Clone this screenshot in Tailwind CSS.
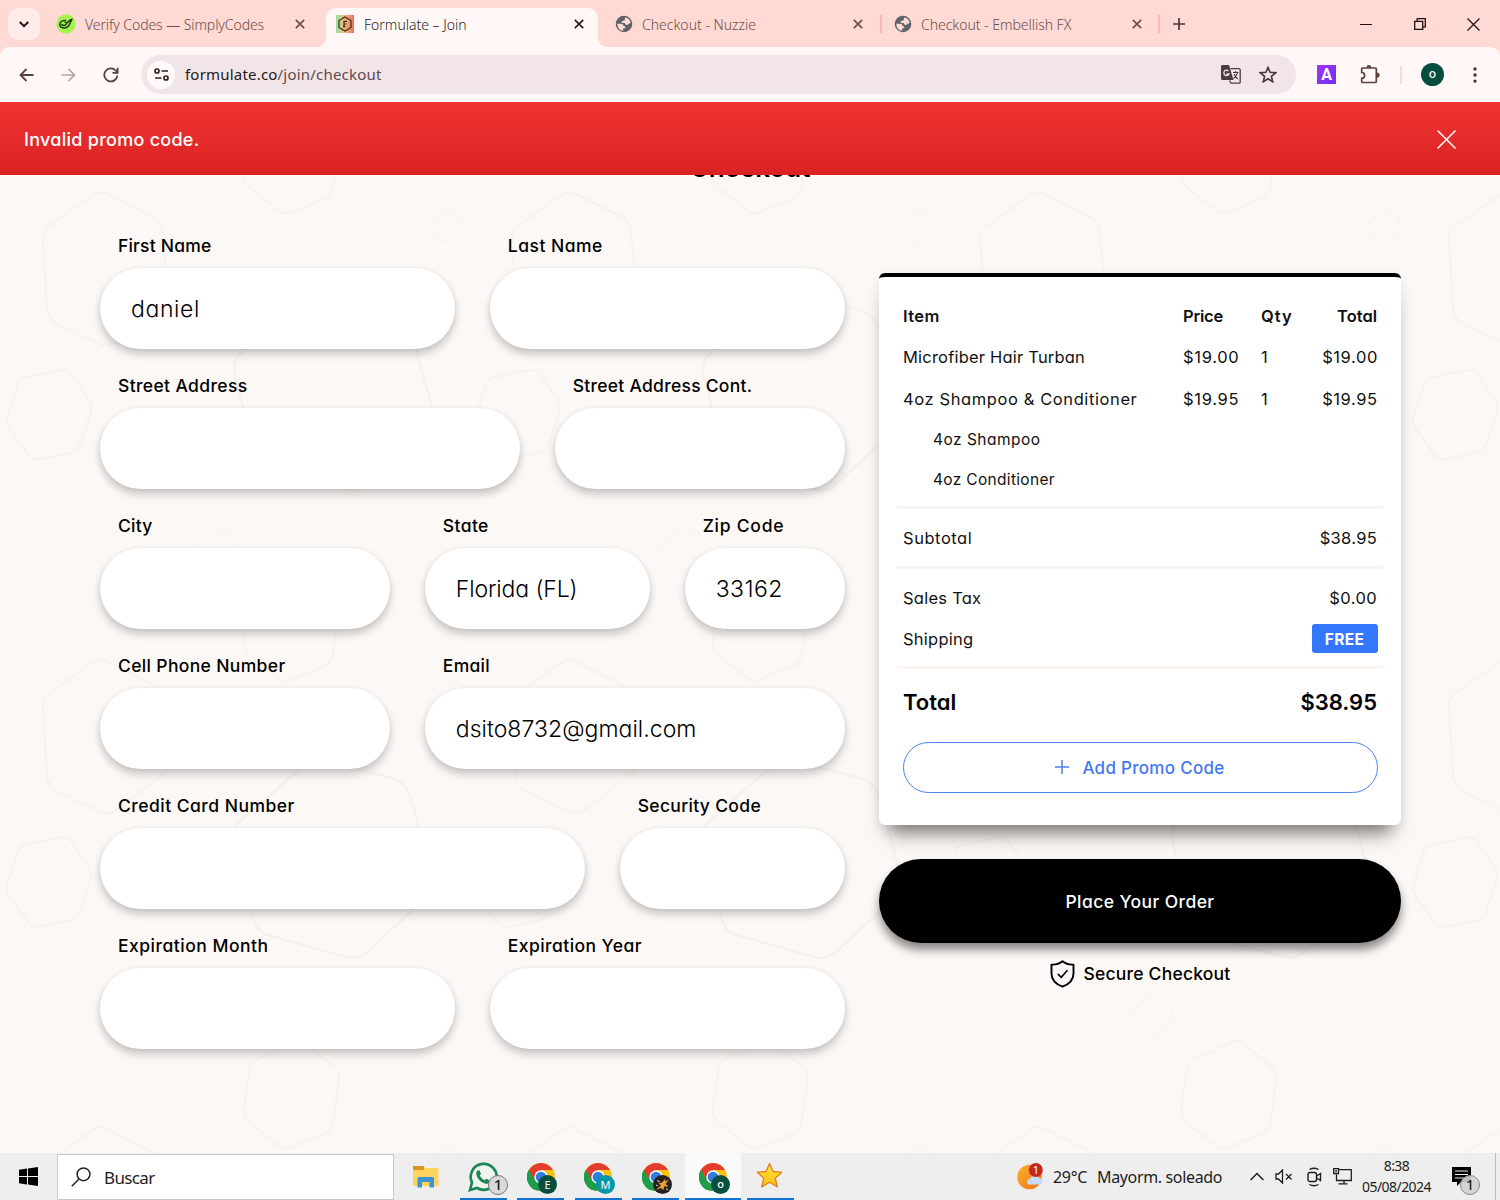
<!DOCTYPE html>
<html lang="en">
<head>
<meta charset="utf-8">
<title>Formulate – Join</title>
<script src="https://cdn.jsdelivr.net/npm/@tailwindcss/browser@4"></script>
</head>
<body class="w-[1500px] h-[1200px] overflow-hidden flex flex-col font-['Noto_Sans',sans-serif] text-black bg-white">

<svg width="0" height="0" class="absolute">
  <defs>
    <symbol id="x" viewBox="0 0 10 10"><path d="M.8 .8 9.2 9.2M9.2 .8 .8 9.2" stroke="currentColor" stroke-width="1.7" fill="none"/></symbol>
    <symbol id="globe" viewBox="0 0 20 20"><circle cx="10" cy="10" r="8.300" fill="currentColor"/><path fill="#ffd9d3" d="M3.300 9.800H7.300Q9.600 10 9.700 12.200H11.200V14.200H9.200V16.800Q3.600 16.300 3.300 9.800zM11 3.400Q15.400 4 16.700 8.500 15.800 9.800 14.800 9.600 14 11.600 12.300 10.800 10.600 10.600 10.800 8.900H8.600Q6.900 8.600 7.700 7.200 8.500 6.600 9.800 6.700 10.900 6.500 10.800 5.200z"/></symbol>
    <symbol id="chrome" viewBox="0 0 28 28">
      <circle cx="14" cy="14" r="14" fill="#fbc116"/>
      <path d="M14 14 1.900 7A14 14 0 0 0 13.500 28L20 17.500z" fill="#1e9e4a"/>
      <path d="M14 14 1.900 7A14 14 0 0 1 26.100 7H14z" fill="#e33b2e"/>
      <path d="M1.900 7 8 17.500 14 14V7z" fill="#e33b2e"/>
      <path d="M1.900 7 8 17.500 13 20 8 27A14 14 0 0 1 1.900 7z" fill="#1e9e4a"/>
      <circle cx="14" cy="14" r="6.700" fill="#fff"/><circle cx="14" cy="14" r="5.300" fill="#2f7de1"/>
    </symbol>
  </defs>
</svg>

<!-- Tab strip -->
<header class="h-[47px] shrink-0 bg-[#ffd9d3] flex items-start text-[14px] font-[350] text-[#6b4f4c]">
  <div class="ml-2 mt-2 w-8 h-8 rounded-[10px] bg-[#ffece8] flex items-center justify-center text-[#1f1311]">
    <svg class="w-[10px] h-[7px]" viewBox="0 0 10 7" fill="none" stroke="currentColor" stroke-width="2"><path d="M.8 1 5 5.200 9.200 1"/></svg>
  </div>
  <div class="ml-4 mt-2 w-[252px] h-8 flex items-center">
    <svg class="w-5 h-5" viewBox="0 0 20 20"><circle cx="10" cy="10" r="9.700" fill="#a4f24e"/><g fill="none" stroke="#173a12" stroke-width="1.500" stroke-linecap="round" stroke-linejoin="round"><path d="M9.500 6.500C5 6 2.800 9.500 4 12s6 2.600 8.300 .3C13.800 10.500 14 8 16 5.200 13.500 5.500 12.500 7.500 10.800 9.200L9.200 8.200"/><path d="M5.800 10.500C7 12 9 11.800 10.200 10.300"/></g></svg>
    <span class="ml-[9px] w-[210px] whitespace-nowrap tracking-[-0.080px]">Verify Codes — SimplyCodes</span>
    <svg class="w-[10px] h-[10px] shrink-0"><use href="#x"/></svg>
  </div>
  <div class="mt-2 ml-[18px] w-[272px] h-[39px] rounded-t-[10px] bg-[#fff8f6] text-[#2b1d1b] relative flex items-start">
    <div class="absolute -left-[10px] bottom-0 w-[10px] h-[10px] bg-[radial-gradient(circle_at_0_0,#ffd9d3_10px,#fff8f6_10.500px)]"></div>
    <div class="absolute -right-[10px] bottom-0 w-[10px] h-[10px] bg-[radial-gradient(circle_at_100%_0,#ffd9d3_10px,#fff8f6_10.500px)]"></div>
    <div class="h-8 flex items-center pl-[10px]">
      <div class="w-[18px] h-[18px] bg-linear-to-r from-[#8fe3a4] via-[#f3b27a] to-[#ee6f63]">
        <svg viewBox="0 0 18 18" fill="none" stroke="#3c2c14" stroke-width="1.200"><path d="M9 2 15 5.500V12.500L9 16 3 12.500V5.500z"/><path d="M11 6.300H8V11.700M8 9h2.500M7 11.700h2.500"/></svg>
      </div>
      <span class="ml-[10px] w-[210px] whitespace-nowrap">Formulate – Join</span>
      <svg class="w-[10px] h-[10px] shrink-0"><use href="#x"/></svg>
    </div>
  </div>
  <div class="mt-2 ml-4 h-8 flex items-center">
    <svg class="w-5 h-5 text-[#5f6368]"><use href="#globe"/></svg>
    <span class="ml-2 w-[211px] whitespace-nowrap">Checkout - Nuzzie</span>
    <svg class="w-[10px] h-[10px]"><use href="#x"/></svg>
    <i class="ml-[17px] w-[2px] h-[18px] bg-[#ffb8ae]"></i>
    <svg class="ml-[11px] w-5 h-5 text-[#5f6368]"><use href="#globe"/></svg>
    <span class="ml-2 w-[211px] whitespace-nowrap tracking-[-0.030px]">Checkout - Embellish FX</span>
    <svg class="w-[10px] h-[10px]"><use href="#x"/></svg>
    <i class="ml-4 w-[2px] h-[18px] bg-[#ffb8ae]"></i>
    <svg class="ml-[13px] w-3 h-3" viewBox="0 0 12 12"><path d="M6 0V12M0 6H12" stroke="#4d3330" stroke-width="1.700"/></svg>
  </div>
  <div class="ml-auto mr-5 mt-2 h-8 flex items-center text-[#1c1110]">
    <svg class="w-3 h-3" viewBox="0 0 12 12"><path d="M0 6.500H12" stroke="currentColor"/></svg>
    <svg class="ml-[42px] w-3 h-3" viewBox="0 0 12 12" fill="none" stroke="currentColor" stroke-width="1.300"><path d="M.7 3.300H8.700V11.300H.7zM3.200 3.300V.7H11.300V8.800H8.700"/></svg>
    <svg class="ml-[41px] w-[13px] h-[13px]" viewBox="0 0 13 13" fill="none" stroke="currentColor" stroke-width="1.200"><path d="M.5 .5 12.500 12.500M12.500 .5 .5 12.500"/></svg>
  </div>
</header>

<!-- Address bar -->
<div class="h-[55px] shrink-0 bg-[#ffd9d3]">
  <div class="h-full rounded-t-[9px] bg-[#fff8f6] flex items-center text-[#5a3f3d]">
    <svg class="ml-[19px] w-[15px] h-[14px]" viewBox="0 0 15 14" fill="none" stroke="#5a3f3d" stroke-width="1.800"><path d="M14.500 7H1.500M7.500 1 1.500 7l6 6"/></svg>
    <svg class="ml-[27px] w-[15px] h-[14px]" viewBox="0 0 15 14" fill="none" stroke="#b5a5a3" stroke-width="1.700"><path d="M.5 7H13.500M7.500 1l6 6-6 6"/></svg>
    <svg class="ml-[27px] w-4 h-4" viewBox="0 0 16 16" fill="none" stroke="#5a3f3d" stroke-width="1.800"><path d="M14.300 8.500A6.500 6.500 0 1 1 12.600 3.500L14.500 5.500M14.600 .8V5.900H9.500"/></svg>
    <div class="ml-[22px] w-[1155px] h-[39px] rounded-full bg-[#f1e5e7] flex items-center">
      <div class="ml-[6px] w-7 h-7 rounded-full bg-[#fffaf9] flex items-center justify-center">
        <svg class="w-[15px] h-[13px]" viewBox="0 0 15 13" fill="none" stroke="#33201f" stroke-width="1.700"><circle cx="3" cy="3" r="2"/><path d="M7.500 3H14M1 10H7.500"/><circle cx="12" cy="10" r="2"/></svg>
      </div>
      <span class="ml-[10px] text-[15px] tracking-[0.200px] text-[#5f4a4b]"><span class="text-[#23191b]">formulate.co</span>/join/checkout</span>
      <svg class="ml-auto w-[20px] h-[19px]" viewBox="0 0 20 19"><path d="M1.500 0H8l4.500 15H1.500A1.500 1.500 0 0 1 0 13.500V1.500A1.500 1.500 0 0 1 1.500 0z" fill="#4a3c3d"/><path d="M9.500 3.700H18A1.200 1.200 0 0 1 19.200 5V17A1.200 1.200 0 0 1 18 18.200H10L8.500 15.500" fill="none" stroke="#4a3c3d" stroke-width="1.300"/><path d="M7.500 6A2.700 2.700 0 1 0 8 9H5.500" fill="none" stroke="#f1e5e7" stroke-width="1.300"/><path d="M12 7.500H17.500M14.600 6v1.500M16.500 7.500C16 10.500 14 12.500 12.500 13.500M13 9c.8 2 2 3.600 3.800 5.200" fill="none" stroke="#4a3c3d" stroke-width="1.100"/></svg>
      <svg class="ml-[18px] mr-[19px] w-[18px] h-[17px]" viewBox="0 0 18 17" fill="none" stroke="#4a3538" stroke-width="1.600"><path d="M9 1.500 11.100 6.300l5.500.5-4.200 3.500 1.300 5.400L9 12.800l-4.700 2.900 1.300-5.400L1.400 6.800l5.500-.5z"/></svg>
    </div>
    <div class="ml-[21px] w-[19px] h-[19px] bg-linear-to-br from-[#a035f5] to-[#6d2cf2] flex items-center justify-center text-white font-bold text-[16px] font-['Roboto',sans-serif]">A</div>
    <svg class="ml-[24px] w-[20px] h-[20px]" viewBox="0 0 20 20"><path d="M2.500 3H15.500A.8.800 0 0 1 16.300 3.800V16.700A.8.800 0 0 1 15.500 17.500H2.500A.8.800 0 0 1 1.700 16.700V13.300A2.900 2.900 0 0 0 1.700 7.500V3.800A.8.800 0 0 1 2.500 3z" fill="none" stroke="#5d3f3c" stroke-width="1.700"/><path d="M6.500 2.500a2.500 2.500 0 0 1 5 0zM17 7.500a2.600 2.600 0 0 1 0 5.200z" fill="#5d3f3c"/></svg>
    <i class="ml-[20px] w-[2px] h-[18px] bg-[#ffd9d3]"></i>
    <div class="ml-[19px] w-[23px] h-[23px] rounded-full bg-[#054d3f] text-white text-[12px] leading-[22px] text-center font-medium">o</div>
    <svg class="ml-[29px] w-1 h-4" viewBox="0 0 4 16" fill="#4a2f2d"><circle cx="2" cy="1.900" r="1.700"/><circle cx="2" cy="8" r="1.700"/><circle cx="2" cy="14.100" r="1.700"/></svg>
  </div>
</div>

<!-- Page -->
<main class="relative h-[1051px] shrink-0 bg-[#fcf8f5] font-['Inter',sans-serif] [font-feature-settings:'cv11']">
  <svg class="absolute inset-0 w-full h-full" viewBox="0 102 1500 1051">
    <defs>
      <pattern id="hex" width="468.700" height="467.500" patternUnits="userSpaceOnUse">
        <g fill="none" stroke="#f5f1ee" stroke-width="1.500" stroke-linejoin="round">
          <path d="M93 195Q100 189 107 194L153 217Q161 221 162 230L168 294Q169 302 162 307L118 341Q109 349 100 344L57 324Q48 318 47 309L43 240Q42 232 49 226z"/>
          <path d="M26 377 60 370Q67 369 71 374L89 400Q93 406 91 412L80 444Q77 451 70 453L40 459Q32 460 28 454L9 428Q5 421 8 415L18 383Q21 378 26 377z"/>
          <path d="M260 123 293 108Q300 103 306 108L334 132Q340 137 339 144L333 187Q332 194 326 198L292 212Q284 216 278 210L250 188Q243 182 244 174L250 132Q252 126 260 123z"/>
          <path id="tilt" stroke-width="2.200" stroke="#f4f0ee" d="M304 298Q313 290 324 293L390 310Q405 314 410 328L432 407Q436 421 425 431L371 481Q359 494 344 489L266 467Q255 462 253 450L235 375Q232 361 242 352z"/>
          <use href="#tilt" y="-467.500"/>
          <path stroke-width="1" stroke="#f7f3f0" d="M212 60 232 66 237 85 218 104 195 98 192 79zM448 210 461 217 463 231 450 243 435 238 431 223z"/>
        </g>
      </pattern>
    </defs>
    <rect y="102" width="1500" height="1051" fill="url(#hex)"/>
  </svg>

  <div class="absolute inset-x-0 top-0 h-[73px] z-10 bg-linear-to-b from-[#f03333] to-[#db2122] flex items-center justify-between pt-[2px] pl-6 pr-[44px] text-white">
    <span class="text-[18px] font-[450] tracking-[0.270px]">Invalid promo code.</span>
    <svg class="w-[19px] h-[19px]" viewBox="0 0 19 19" stroke="#fff" stroke-width="1.600" stroke-linecap="round"><path d="M1 1 18 18M18 1 1 18"/></svg>
  </div>

  <h1 class="relative pt-[50px] h-[127px] text-center text-[26px] leading-[32px] font-semibold">Checkout</h1>

  <div class="relative flex pl-[100px]">
    <form class="grid grid-cols-12 gap-x-[35px] auto-rows-[139.900px] w-[744.500px] mt-[0.400px] [&_label]:block [&_label]:h-[34px] [&_label]:mb-[5px] [&_label]:leading-[33px] [&_label]:pl-[18px] [&_label]:text-[17.500px] [&_label]:font-[450] [&_label]:whitespace-nowrap [&_input]:block [&_input]:w-full [&_input]:h-[81px] [&_input]:rounded-full [&_input]:bg-white [&_input]:px-[31px] [&_input]:text-[23px] [&_input]:font-[330] [&_input]:shadow-[0_5px_9px_rgba(0,0,0,0.220),0_0_5px_rgba(0,0,0,0.040)]">
      <div class="col-span-6"><label class="tracking-[0.200px]">First Name</label><input class="tracking-[0.600px]" value="daniel"></div>
      <div class="col-span-6"><label class="tracking-[0.500px]">Last Name</label><input></div>
      <div class="col-span-7"><label class="tracking-[0.370px]">Street Address</label><input></div>
      <div class="col-span-5"><label class="tracking-[0.270px]">Street Address Cont.</label><input></div>
      <div class="col-span-5"><label class="tracking-[0.250px]">City</label><input></div>
      <div class="col-span-4"><label class="tracking-[0.400px]">State</label><input class="tracking-[-0.120px]" value="Florida (FL)"></div>
      <div class="col-span-3"><label class="tracking-[0.750px]">Zip Code</label><input class="tracking-[0.450px]" value="33162"></div>
      <div class="col-span-5"><label class="tracking-[0.350px]">Cell Phone Number</label><input></div>
      <div class="col-span-7"><label class="tracking-[0.300px]">Email</label><input class="tracking-[0.040px]" value="dsito8732@gmail.com"></div>
      <div class="col-span-8"><label class="tracking-[0.480px]">Credit Card Number</label><input></div>
      <div class="col-span-4"><label class="tracking-[0.320px]">Security Code</label><input></div>
      <div class="col-span-6"><label class="tracking-[0.500px]">Expiration Month</label><input></div>
      <div class="col-span-6"><label class="tracking-[0.450px]">Expiration Year</label><input></div>
    </form>

    <aside class="ml-[34.500px] mt-[44px] w-[522px]">
      <section class="h-[552px] rounded-[6px] border-t-4 border-black bg-white shadow-[0_18px_18px_-10px_rgba(0,0,0,0.500),0_4px_14px_rgba(0,0,0,0.080)] px-[18px] pt-[19px] text-[16.500px] font-[370]">
        <div class="px-[6px] grid grid-cols-[280px_78px_1fr_auto] items-center auto-rows-[42px] text-[#111]">
          <b class="font-semibold h-[42px] leading-[40px] tracking-[0.400px]">Item</b><b class="font-semibold h-[42px] leading-[40px] tracking-[-0.200px]">Price</b><b class="font-semibold h-[42px] leading-[40px] tracking-[1px]">Qty</b><b class="font-semibold h-[42px] leading-[40px] text-right">Total</b>
          <span class="tracking-[0.200px] pb-1">Microfiber Hair Turban</span><span class="tracking-[0.700px] pb-1">$19.00</span><span class="pb-1">1</span><span class="tracking-[0.600px] -mr-px pb-1">$19.00</span>
          <span class="tracking-[0.600px] pb-[4px]">4oz Shampoo &amp; Conditioner</span><span class="tracking-[0.700px] pb-[4px]">$19.95</span><span class="pb-[4px]">1</span><span class="tracking-[0.600px] -mr-px pb-[4px]">$19.95</span>
        </div>
        <div class="pl-[36px] text-[15.500px] leading-[40px] -mt-[2px] text-[#111]">
          <p class="tracking-[0.480px]">4oz Shampoo</p>
          <p class="tracking-[0.320px]">4oz Conditioner</p>
        </div>
        <div class="mt-[6px] border-t-3 border-[#f7f4f2] h-[60px] px-[6px] pt-[2px] flex items-center justify-between text-[#111]"><span class="tracking-[0.550px]">Subtotal</span><span class="tracking-[0.300px]">$38.95</span></div>
        <div class="border-t-3 border-[#f8f4f1] px-[6px] h-[100px] pt-[9px] text-[#111]">
          <div class="h-[41px] flex items-center justify-between"><span class="tracking-[0.250px]">Sales Tax</span><span class="tracking-[0.400px]">$0.00</span></div>
          <div class="h-[41px] flex items-center justify-between"><span class="tracking-[0.250px]">Shipping</span><span class="-mt-[2px] -mr-[0.500px] w-[66px] h-[29px] rounded-[3px] bg-[#3377ff] text-white text-[15.500px] font-bold tracking-[0.400px] leading-[31px] text-center">FREE</span></div>
        </div>
        <div class="border-t-3 border-[#fbf4f0] px-[6px] h-[70px] flex items-center justify-between text-[22px] font-semibold"><span>Total</span><span>$38.95</span></div>
        <button type="button" class="mt-[6px] ml-[5.500px] w-[475px] h-[51px] rounded-full border border-[#4a82f0] flex items-center justify-center text-[#4078f2] text-[17px] font-[450] tracking-[0.300px]">
          <svg class="mr-[13px] w-[14px] h-[14px] -mt-px" viewBox="0 0 14 14" stroke="#4a82f0" stroke-width="1.500"><path d="M7 0V14M0 7H14"/></svg><span class="pt-[2px]">Add Promo Code</span></button>
      </section>
      <button type="button" class="mt-[34px] w-full h-[84px] pt-[2px] rounded-full bg-black text-white text-[17.500px] font-[450] tracking-[0.420px] shadow-[0_7px_10px_rgba(0,0,0,0.450)]">Place Your Order</button>
      <div class="mt-[17px] ml-px h-7 flex items-center justify-center text-[17.500px] tracking-[0.220px] font-[450]">
        <svg class="mr-2 w-[25px] h-[28px]" viewBox="0 0 25 28" fill="none" stroke="#000" stroke-width="1.900" stroke-linejoin="round"><path d="M12.500 1.300C9.800 3.600 6.200 4.900 1.500 4.600V13.500C1.500 19.500 5.500 24 12.500 26.700 19.500 24 23.500 19.500 23.500 13.500V4.600C18.800 4.900 15.200 3.600 12.500 1.300z"/><path stroke-width="1.700" stroke-linecap="round" d="M8.300 14.300 11.300 17.300 17 10.700"/></svg>Secure Checkout</div>
    </aside>
  </div>
</main>

<!-- Taskbar -->
<footer class="h-[47px] shrink-0 bg-[#eeeeee] flex items-stretch text-[#1d1d1d]">
  <div class="w-[57px] flex items-center justify-center">
    <svg class="w-[19px] h-[19px]" viewBox="0 0 19 19"><path d="M0 2.700 8 1.600V9H0zM9 1.400 19 0V9H9zM0 10H8V17.400L0 16.300zM9 10H19V19L9 17.600z"/></svg>
  </div>
  <div class="w-[337px] mt-px h-[46px] bg-white border border-[#c9c9c9] flex items-center pl-[13px]">
    <svg class="w-[20px] h-[20px]" viewBox="0 0 20 20" fill="none" stroke="#222" stroke-width="1.500"><circle cx="12.500" cy="7.300" r="6.400"/><path d="M8 12 .8 19.200"/></svg>
    <span class="ml-[13px] mt-[2px] text-[17px] tracking-[-0.650px]">Buscar</span>
  </div>
  <div class="ml-[19px] w-[26px] flex items-center">
    <svg class="w-[26px] h-[22px]" viewBox="0 0 26 22"><path d="M0 0H10.500L12 2H25.500V20H0z" fill="#ffd45e"/><path d="M0 0H10.500L11.500 2 10.500 4H0z" fill="#d8961a"/><path d="M4.500 21.500V12.500Q4.500 11 6 11H19.500Q21 11 21 12.500V21.500H16.500V16H9V21.500z" fill="#3d93d3"/></svg>
  </div>
  <div class="ml-[21px] w-[47px] border-b-2 border-[#1174d4] relative">
    <svg class="absolute left-[8px] top-[9px] w-[30px] h-[30px]" viewBox="0 0 30 30"><path d="M2 28 4 20.500A13 13 0 1 1 9 26z" fill="#eef5f0" stroke="#1b8654" stroke-width="2.700"/><path d="M9.500 8.500 11.500 8.200 13 12 11.800 13.600C13 16 14.300 17.200 16.500 18.200L18.200 16.700 21.800 18.400C21.800 21 19.500 22.200 17.500 21.700 12.500 20.300 9 16.500 8.300 12.300 8.200 10.500 8.500 9.300 9.500 8.500z" fill="#1b8654"/></svg>
    <span class="absolute left-[28px] top-[22px] w-[20px] h-[20px] rounded-full bg-[#d9d9d9] border border-[#777] text-[15px] leading-[17px] text-center font-medium">1</span>
  </div>
  <div class="ml-[10px] w-[47px] border-b-2 border-[#1174d4] relative">
    <svg class="absolute left-[10px] top-[10px] w-[28px] h-[28px]"><use href="#chrome"/></svg>
    <span class="absolute left-[21px] top-[22px] w-[19px] h-[19px] rounded-full bg-[#07503f] text-white text-[11px] leading-[19px] text-center">E</span>
  </div>
  <div class="ml-[11px] w-[47px] border-b-2 border-[#1174d4] relative">
    <svg class="absolute left-[9px] top-[10px] w-[28px] h-[28px]"><use href="#chrome"/></svg>
    <span class="absolute left-[21px] top-[22px] w-[19px] h-[19px] rounded-full bg-[#0897a7] text-white text-[11px] leading-[19px] text-center">M</span>
  </div>
  <div class="ml-[10px] w-[47px] border-b-2 border-[#1174d4] relative">
    <svg class="absolute left-[10px] top-[10px] w-[28px] h-[28px]"><use href="#chrome"/></svg>
    <svg class="absolute left-[21px] top-[22px] w-[19px] h-[19px]" viewBox="0 0 19 19"><circle cx="9.500" cy="9.500" r="9.500" fill="#24211f"/><path d="M3 15 8 10.500 5.500 8.500 9 7.500 12.500 3.500 12 6.500 16 4.500 12.500 9 15.500 11.500 11 11.500 10.500 15 8 13z" fill="#f0a12c"/><path d="M4 5.500 7 7M13 13.500 15 15M5 11 3 10" stroke="#ddd"/></svg>
  </div>
  <div class="ml-[6px] w-[56px] bg-[#fafafa] border-b-2 border-[#1174d4] relative">
    <svg class="absolute left-[14px] top-[10px] w-[28px] h-[28px]"><use href="#chrome"/></svg>
    <span class="absolute left-[26px] top-[22px] w-[19px] h-[19px] rounded-full bg-[#07503f] text-white text-[11px] leading-[18px] text-center font-medium">o</span>
  </div>
  <div class="ml-[6px] w-[47px] border-b-2 border-[#1174d4] relative">
    <svg class="absolute left-[9px] top-[9px] w-[27px] h-[27px]" viewBox="0 0 27 27"><defs><linearGradient id="sg" x1="0" y1="0" x2="0" y2="1"><stop offset="0" stop-color="#ffe93b"/><stop offset="1" stop-color="#fdbb12"/></linearGradient></defs><path d="M13.500 1.500 17 9.500 25.700 10.200 19.200 16.200 21.300 25 13.500 20.300 5.700 25 7.800 16.200 1.300 10.200 10 9.500z" fill="url(#sg)" stroke="#e0821c" stroke-width="1.300" stroke-linejoin="round"/></svg>
  </div>

  <div class="ml-auto flex items-center">
    <svg class="w-[27px] h-[27px]" viewBox="0 0 27 27"><defs><linearGradient id="sun" x1="0" y1="0" x2="1" y2="1"><stop offset="0" stop-color="#fbb034"/><stop offset="1" stop-color="#ee7511"/></linearGradient></defs><circle cx="12.500" cy="14" r="12.300" fill="url(#sun)"/><path d="M12 21.500a2.800 2.800 0 0 1 .8-5.500 5 5 0 0 1 9-1 3.300 3.300 0 0 1 1.200 6.500z" fill="#c4dcfa"/><circle cx="18.800" cy="7" r="7" fill="#c6281f"/><text x="18.800" y="11" font-size="11" fill="#fff" text-anchor="middle">1</text></svg>
    <span class="ml-[9px] w-[44px] text-[16px] tracking-[-0.300px]">29°C</span>
    <span class="w-[153px] text-[16px] tracking-[-0.350px] whitespace-nowrap">Mayorm. soleado</span>
    <svg class="w-[14px] h-[9px]" viewBox="0 0 14 9" fill="none" stroke="#1d1d1d" stroke-width="1.500"><path d="M.6 8 7 1.500 13.400 8"/></svg>
    <svg class="ml-[11px] w-[18px] h-[15px]" viewBox="0 0 18 15" fill="none" stroke="#1d1d1d" stroke-width="1.300"><path d="M1 5V10H3.500L7.500 14V1L3.500 5zM11 5l5.500 5.500M16.500 5 11 10.500"/></svg>
    <svg class="ml-[14px] w-[15px] h-[20px]" viewBox="0 0 15 20" fill="none" stroke="#1d1d1d" stroke-width="1.400"><rect x="1" y="5.500" width="8.500" height="9" rx="2"/><path d="M9.500 9 13.500 6.500V13.500L9.500 11M2.500 2.500Q7 0 11.500 2.500M2.500 17.500Q7 20 11.500 17.500"/></svg>
    <svg class="ml-[11px] w-[19px] h-[17px]" viewBox="0 0 19 17" fill="none" stroke="#1d1d1d" stroke-width="1.300"><path d="M5.500 1.700H18.300V12.500H3.500V6.500M11 12.500V15.800M5.500 15.800H14.500M.7 .7H5.500V5.500H.7zM2.200 3H4"/></svg>
    <div class="ml-[3px] mr-[2px] w-[83px] text-center text-[14px] leading-[21px] tracking-[-0.550px] -mt-[2px]">8:38<br>05/08/2024</div>
    <div class="ml-[12px] relative w-[29px] h-[28px] self-start mt-[14px]">
      <svg class="w-[20px] h-[20px]" viewBox="0 0 20 20"><path d="M0 0H19V15H9L5 19V15H0z"/><path d="M3 4H16M3 7.500H16M3 11H12" stroke="#eee" stroke-width="1.200"/></svg>
      <span class="absolute left-[8px] top-[8px] w-[20px] h-[20px] rounded-full bg-[#d2d2d2]/90 border border-[#888] text-[14px] leading-[17px] text-center font-medium">1</span>
    </div>
    <i class="ml-[14px] mr-[4px] w-px h-[47px] bg-[#bdbdbd]"></i>
  </div>
</footer>
</body>
</html>
